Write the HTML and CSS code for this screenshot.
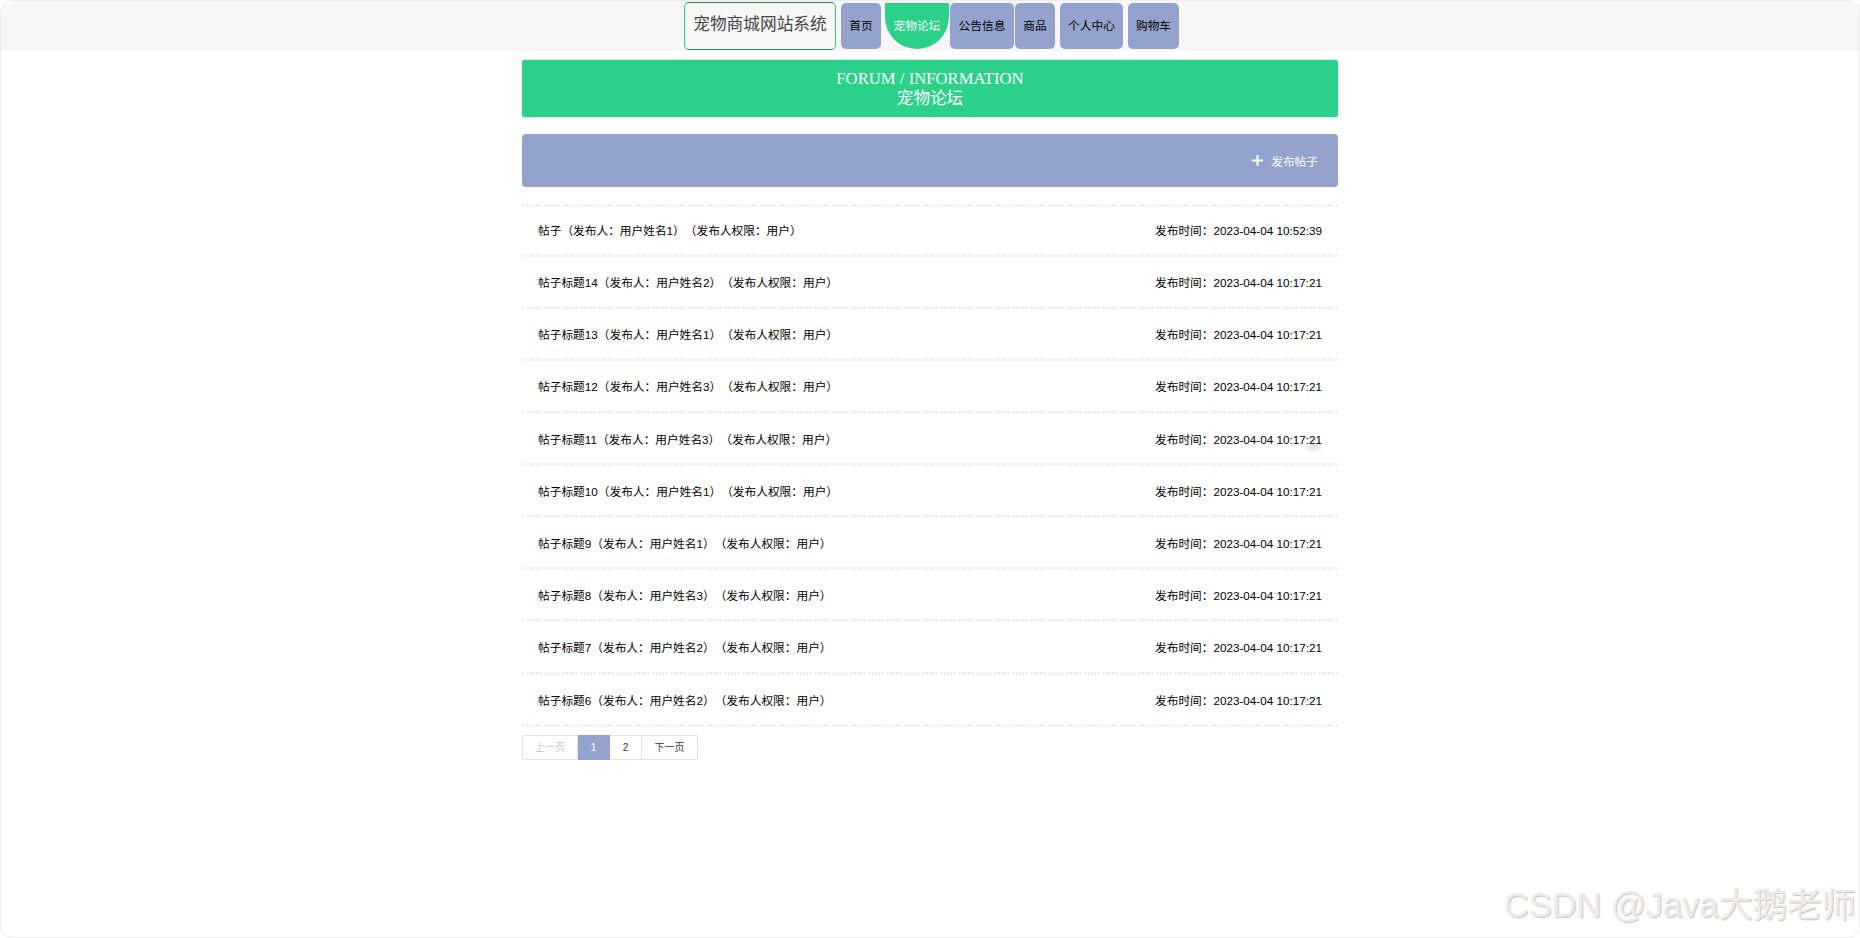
FILE: index.html
```html
<!DOCTYPE html>
<html lang="zh-CN">
<head>
<meta charset="utf-8">
<title>宠物论坛</title>
<link rel="stylesheet" href="styles.css">
</head>
<body>
<div class="page">
  <header class="nav">
    <div class="logo">宠物商城网站系统</div>
    <a class="nav-item w-home">首页</a>
    <a class="nav-item active">宠物论坛</a>
    <a class="nav-item w-notice">公告信息</a>
    <a class="nav-item w-goods">商品</a>
    <a class="nav-item w-center">个人中心</a>
    <a class="nav-item w-cart">购物车</a>
  </header>
  <main class="main">
    <section class="banner">
      <div class="banner-en">FORUM / INFORMATION</div>
      <div class="banner-cn">宠物论坛</div>
    </section>
    <section class="toolbar">
      <button class="publish">
        <svg class="plus" viewBox="0 0 11 11" width="11" height="11"><path d="M5.5 0v11M0 5.5h11" stroke="#fff" stroke-width="2" fill="none"/></svg>
        <span>发布帖子</span>
      </button>
    </section>
    <ul class="list">
      <li class="row"><span>帖子（发布人：用户姓名1）（发布人权限：用户）</span><span>发布时间：2023-04-04 10:52:39</span></li>
      <li class="row"><span>帖子标题14（发布人：用户姓名2）（发布人权限：用户）</span><span>发布时间：2023-04-04 10:17:21</span></li>
      <li class="row"><span>帖子标题13（发布人：用户姓名1）（发布人权限：用户）</span><span>发布时间：2023-04-04 10:17:21</span></li>
      <li class="row"><span>帖子标题12（发布人：用户姓名3）（发布人权限：用户）</span><span>发布时间：2023-04-04 10:17:21</span></li>
      <li class="row"><span>帖子标题11（发布人：用户姓名3）（发布人权限：用户）</span><span>发布时间：2023-04-04 10:17:21</span></li>
      <li class="row"><span>帖子标题10（发布人：用户姓名1）（发布人权限：用户）</span><span>发布时间：2023-04-04 10:17:21</span></li>
      <li class="row"><span>帖子标题9（发布人：用户姓名1）（发布人权限：用户）</span><span>发布时间：2023-04-04 10:17:21</span></li>
      <li class="row"><span>帖子标题8（发布人：用户姓名3）（发布人权限：用户）</span><span>发布时间：2023-04-04 10:17:21</span></li>
      <li class="row"><span>帖子标题7（发布人：用户姓名2）（发布人权限：用户）</span><span>发布时间：2023-04-04 10:17:21</span></li>
      <li class="row"><span>帖子标题6（发布人：用户姓名2）（发布人权限：用户）</span><span>发布时间：2023-04-04 10:17:21</span></li>
    </ul>
    <nav class="pager">
      <a class="pg pg-prev">上一页</a>
      <a class="pg pg-num current">1</a>
      <a class="pg pg-num">2</a>
      <a class="pg pg-next">下一页</a>
    </nav>
  </main>
  <div class="smudge"></div>
  <div class="watermark">CSDN @Java大鹅老师</div>
</div>
</body>
</html>
```

FILE: styles.css
```css
* { box-sizing: border-box; }
html, body { margin: 0; padding: 0; background: #fff; }
body {
  font-family: "Liberation Sans", "Noto Sans CJK SC", sans-serif;
  font-size: 11.7px;
  color: #000;
  text-spacing-trim: space-all;
}
.page {
  position: relative;
  height: 938px;
  overflow: hidden;
  border: 1px solid #ececec;
  border-radius: 12px;
}
.nav {
  height: 50px;
  background: #f7f7f7;
  display: flex;
  padding-left: 683px;
  align-items: flex-start;
}
.logo {
  width: 152px;
  height: 48px;
  margin-top: 1px;
  border: 1px solid #2ad188;
  border-bottom-color: #1f8f60;
  border-top-color: #1f8f60;
  border-radius: 5px;
  font-size: 16.7px;
  line-height: 44px;
  text-align: center;
  color: #444;
  white-space: nowrap;
}
.nav-item {
  display: block;
  height: 46px;
  margin-top: 2px;
  background: #93a3cd;
  border-radius: 5px;
  line-height: 45px;
  text-align: center;
  color: #000;
  white-space: nowrap;
}
.w-home { width: 40px; margin-left: 5px; }
.active {
  width: 64px;
  margin-left: 4px;
  background: #2bd189;
  color: #fff;
  border-radius: 0 0 32px 32px;
}
.w-notice { width: 64px; margin-left: 1px; }
.w-goods { width: 40px; margin-left: 1px; }
.w-center { width: 63px; margin-left: 5px; }
.w-cart { width: 51px; margin-left: 5px; }
.main {
  width: 816px;
  margin-left: 521px;
  padding-top: 8px;
}
.banner {
  height: 59px;
  background: #2bd189;
  border: 1px solid #e3e3e3;
  border-width: 1px 0;
  border-radius: 3px;
  padding-top: 9px;
  color: #fff;
  text-align: center;
}
.banner-en {
  font-family: "Liberation Serif", serif;
  font-size: 16.7px;
  line-height: 20px;
}
.banner-cn {
  font-size: 16.6px;
  line-height: 19px;
}
.toolbar {
  margin-top: 16px;
  height: 53px;
  background: #93a3cd;
  border-radius: 4px;
  display: flex;
  align-items: center;
  justify-content: flex-end;
  padding: 0 20px 0 0;
}
.publish {
  display: flex;
  align-items: center;
  gap: 8px;
  padding: 0;
  border: 0;
  background: none;
  color: #fff;
  font: inherit;
}
.plus { display: block; }
.list {
  --dots: repeating-linear-gradient(90deg, #eeeeee 0 2.4px, transparent 2.4px 3.6px);
  list-style: none;
  margin: 17px 0 0;
  padding: 3px 0 0;
  background: var(--dots) top / 100% 3px no-repeat;
}
.row {
  height: 52.2px;
  background: var(--dots) bottom / 100% 3px no-repeat;
  display: flex;
  align-items: center;
  justify-content: space-between;
  padding: 0 16px 3px;
  color: #000;
}
.row:first-child { height: 50px; padding-bottom: 5px; }
.pager {
  display: flex;
  margin-top: 8px;
  height: 25px;
  font-size: 10px;
  color: #333;
}
.pg {
  display: block;
  border: 1px solid #e3e3e3;
  border-left-width: 0;
  line-height: 23px;
  text-align: center;
  background: #fff;
}
.pg-prev {
  width: 56px;
  border-left-width: 1px;
  border-radius: 2px 0 0 2px;
  color: #c4c4c4;
}
.pg-num { width: 32px; }
.pg-next { width: 56px; border-radius: 0 2px 2px 0; }
.current {
  background: #93a3cd;
  border-color: #93a3cd;
  color: #fff;
}
.smudge {
  position: absolute;
  left: 1306px;
  top: 442px;
  width: 14px;
  height: 6px;
  border-radius: 50%;
  background: #000;
  opacity: 0.2;
  filter: blur(3px);
}
.watermark {
  position: absolute;
  right: 3px;
  bottom: 7px;
  font-size: 34.4px;
  line-height: 50px;
  white-space: nowrap;
  color: #ececec;
  text-shadow: 1px 1px 1px #c4c4c4;
}
```
